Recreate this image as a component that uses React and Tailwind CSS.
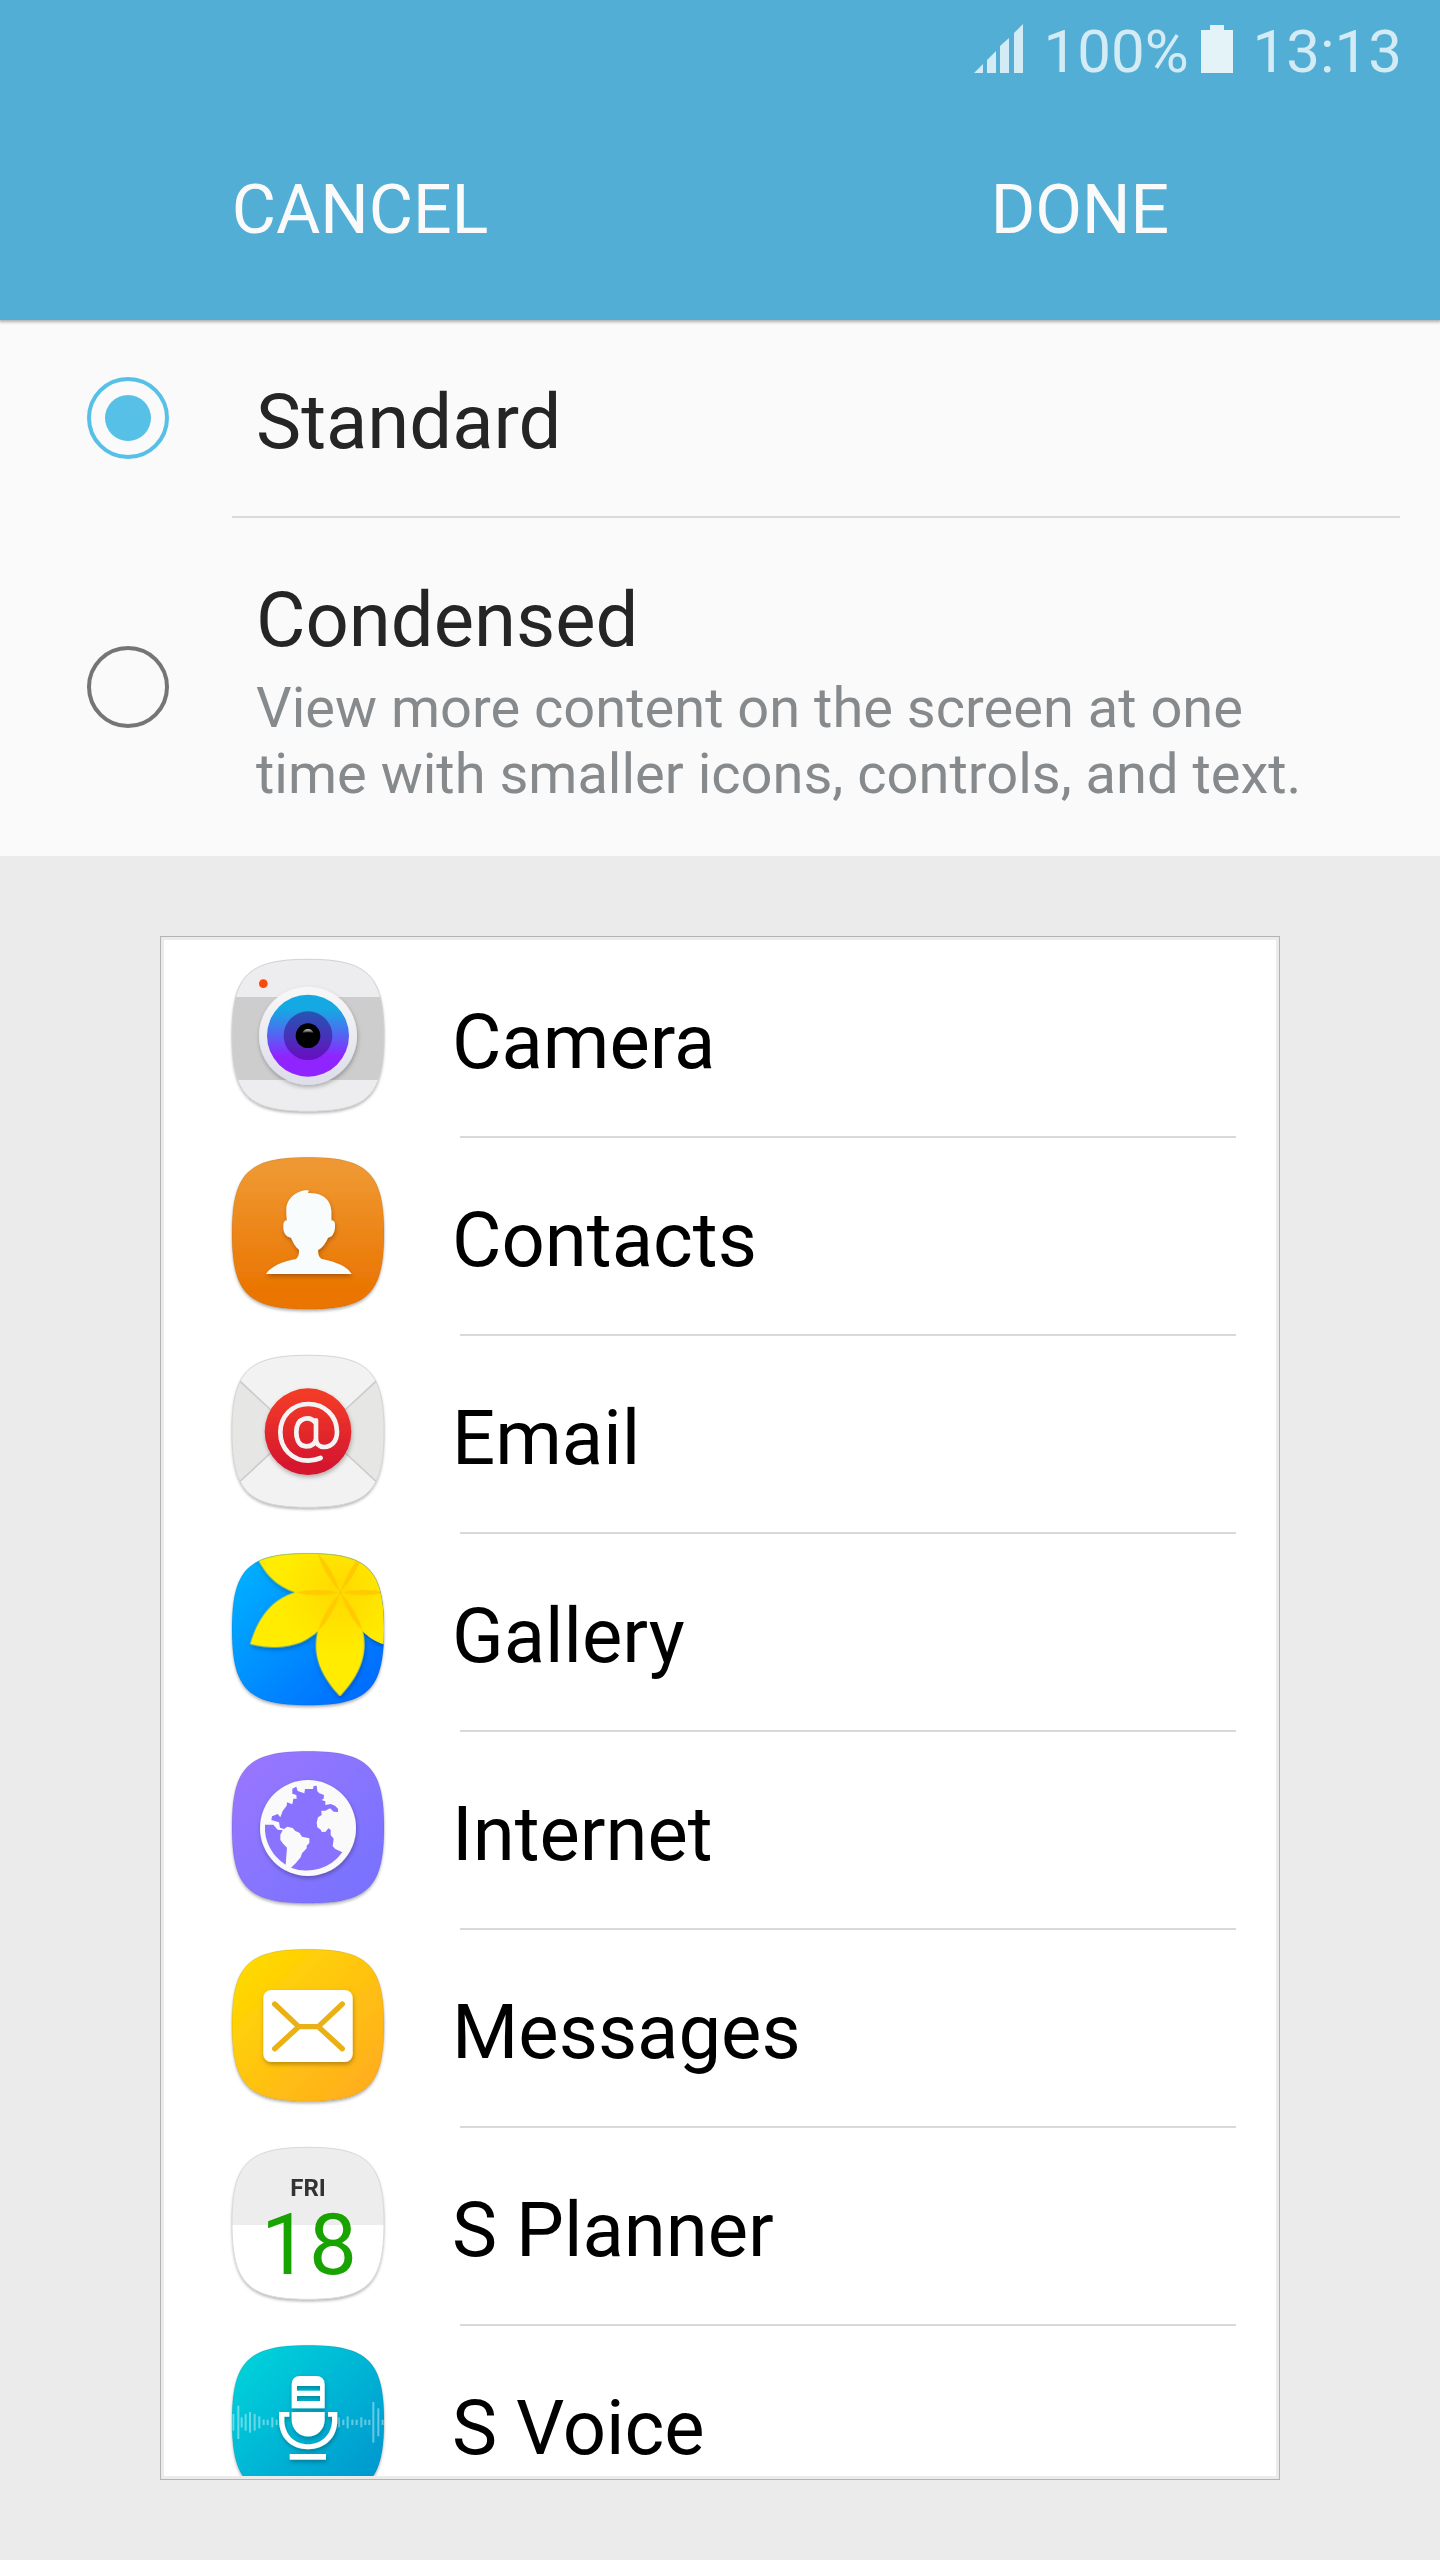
import React, { useState } from "react";

const SQUIRCLE =
  "M12 238C12 58 60 10 240 10S468 58 468 238S420 466 240 466S12 418 12 238Z";

// Rounded app tile. Artwork is drawn in units of a third of a pixel.
function AppIcon({ id, top, fill, outline, children }) {
  return (
    <svg
      viewBox={`54 ${top} 480 480`}
      className="size-40 shrink-0 overflow-visible"
      aria-hidden="true"
    >
      <defs>
        <clipPath id={`${id}-clip`}>
          <path d={SQUIRCLE} transform={`translate(54 ${top})`} />
        </clipPath>
        <filter id={`${id}-tile`} x="-10%" y="-10%" width="120%" height="120%">
          <feDropShadow dx="0" dy="6" stdDeviation="5" floodColor="#000" floodOpacity="0.3" />
        </filter>
        <filter id={`${id}-soft`} x="-20%" y="-20%" width="140%" height="150%">
          <feDropShadow dx="2" dy="7" stdDeviation="6" floodColor="#000" floodOpacity="0.28" />
        </filter>
      </defs>
      {children[0]}
      <path d={SQUIRCLE} transform={`translate(54 ${top})`} fill={fill} filter={`url(#${id}-tile)`} />
      <g clipPath={`url(#${id}-clip)`}>{children[1]}</g>
      <path
        d={SQUIRCLE}
        transform={`translate(54 ${top})`}
        fill="none"
        stroke={outline || "#00000018"}
        strokeWidth="3"
      />
    </svg>
  );
}

function Gradient({ id, from, to, diagonal }) {
  return (
    <linearGradient id={id} x1="0" y1="0" x2={diagonal ? "1" : "0"} y2="1">
      <stop offset="0.1" stopColor={from} />
      <stop offset="0.9" stopColor={to} />
    </linearGradient>
  );
}

function CameraIcon() {
  return (
    <AppIcon id="camera" top={48} fill="#ededf0" outline="#d2d2d2">
      <defs>
        <linearGradient id="camera-lens" x1="0" y1="0" x2="0" y2="1">
          <stop offset="0.18" stopColor="#15a9e3" />
          <stop offset="0.5" stopColor="#5563f3" />
          <stop offset="0.75" stopColor="#9024ff" />
        </linearGradient>
        <Gradient id="camera-ring" from="#f6f6f7" to="#dfdfec" />
        <linearGradient id="camera-glint" x1="0" y1="0" x2="0" y2="1">
          <stop offset="0" stopColor="#d0d0d0" />
          <stop offset="1" stopColor="#222" />
        </linearGradient>
      </defs>
      <>
        <rect x="54" y="171" width="480" height="249" fill="#cdcdcd" />
        <circle cx="160" cy="131" r="13" fill="#fb4a08" />
        <circle cx="294" cy="287" r="147" fill="url(#camera-ring)" filter="url(#camera-soft)" />
        <circle cx="294" cy="287" r="123" fill="url(#camera-lens)" />
        <circle cx="294" cy="287" r="73" fill="#34007a" opacity="0.48" />
        <circle cx="294" cy="287" r="37" fill="#000" />
        <path d="M278 279C280 263 308 263 310 279Q294 274 278 279Z" fill="url(#camera-glint)" />
      </>
    </AppIcon>
  );
}

function ContactsIcon() {
  return (
    <AppIcon id="contacts" top={42} fill="url(#contacts-bg)">
      <defs>
        <Gradient id="contacts-bg" from="#ef9730" to="#ea7400" />
      </defs>
      <path
        d="M296 151L294 159C340 156 364 183 364 215V241C374 242 376 250 375 262C373 282 365 292 354 293C345 312 338 322 324 330C324 344 328 354 336 357C380 366 412 380 425 402H168C180 380 220 364 258 357C266 350 268 340 267 329C255 320 250 308 243 293C230 292 220 280 220 262C220 248 222 242 231 241C229 230 229 220 229 208C230 175 260 150 296 151Z"
        fill="#f8fcfd"
        filter="url(#contacts-soft)"
      />
    </AppIcon>
  );
}

function EmailIcon() {
  return (
    <AppIcon id="email" top={36} fill="#f2f2f2" outline="#d5d5d5">
      <defs>
        <Gradient id="email-badge" from="#f23a28" to="#d4172f" />
      </defs>
      <>
        <path d="M40 75L88 122L245 274L88 426L40 470Z" fill="#e6e6e5" />
        <path d="M548 75L500 122L343 274L500 426L548 470Z" fill="#e6e6e5" />
        <path
          d="M60 95L88 122L225 249M528 95L500 122L363 249M60 452L88 426L225 299M528 452L500 426L363 299"
          fill="none"
          stroke="#cbcbcb"
          strokeWidth="5"
        />
        <circle cx="294" cy="275" r="130" fill="url(#email-badge)" filter="url(#email-soft)" />
        <path
          d="M318 241V297C318 312 328 321 342 321C366 321 381 302 381 275C380 226 343 192 295 192C247 192 211 229 211 277C211 326 247 362 295 362C309 362 320 359 332 354M318 250C306 233 292 234 283 236C266 241 259 256 259 277C259 300 268 319 289 319C303 319 315 312 318 297"
          fill="none"
          stroke="#f4f4f4"
          strokeWidth="14"
          strokeLinecap="round"
          strokeLinejoin="round"
        />
      </>
    </AppIcon>
  );
}

const TURNS = [0, 60, 120, 180, 240, 300];

function GalleryIcon() {
  return (
    <AppIcon id="gallery" top={30} fill="url(#gallery-bg)">
      <defs>
        <Gradient id="gallery-bg" from="#00aeff" to="#006cff" diagonal />
        <radialGradient id="gallery-petal" gradientUnits="userSpaceOnUse" cx="0" cy="0" r="300">
          <stop offset="0.1" stopColor="#ffdc00" />
          <stop offset="0.6" stopColor="#ffec00" />
        </radialGradient>
      </defs>
      <g transform="translate(391 157)">
        <g filter="url(#gallery-soft)">
          {TURNS.map((turn) => (
            <path
              key={turn}
              transform={`rotate(${turn})`}
              d="M0 0C32 38 58 80 67 114C80 170 72 235 -1 312C-74 235 -82 170 -67 114C-58 80 -32 38 0 0Z"
              fill="url(#gallery-petal)"
            />
          ))}
        </g>
        {TURNS.map((turn) => (
          <path
            key={turn}
            transform={`rotate(${turn})`}
            d="M0 0Q75 -16 134 0Q75 16 0 0Z"
            fill="#ffca00"
          />
        ))}
      </g>
    </AppIcon>
  );
}

function InternetIcon() {
  return (
    <AppIcon id="internet" top={24} fill="url(#internet-bg)">
      <defs>
        <Gradient id="internet-bg" from="#9776ff" to="#7872ff" diagonal />
      </defs>
      <>
        <circle cx="294" cy="264" r="144" fill="#fafafa" filter="url(#internet-soft)" />
        <path
          d="M247 146L259 140L263 153L283 160L285 147L309 147L311 138L320 137L322 154L328 160L342 165L341 176L334 180L346 184L346 195L362 192L375 197L384 206V216L371 215L360 205L346 212H334L335 225L324 232L320 248L322 262L333 270L335 276L347 275L355 265L362 269V285L371 296L368 319L376 327L397 337A131 131 0 0 1 243 383L257 370L272 352L276 340L290 325V317L298 309V295L276 290L268 278L256 273L248 264L232 260L222 267L210 263L207 247L184 240L186 229L203 222L211 232L218 213L230 197L231 187L247 193L250 176L260 176L259 165L247 161Z"
          fill="#8872ff"
        />
        <path
          d="M165 254H190L203 269L218 271L211 284V300L220 312L231 323L227 374A130 130 0 0 1 165 254Z"
          fill="#8a73ff"
        />
      </>
    </AppIcon>
  );
}

function MessagesIcon() {
  return (
    <AppIcon id="messages" top={33} fill="url(#messages-bg)">
      <defs>
        <Gradient id="messages-bg" from="#ffd900" to="#ffae1e" diagonal />
      </defs>
      <>
        <rect x="160" y="165" width="268" height="216" rx="24" fill="#fff" filter="url(#messages-soft)" />
        <path
          d="M194 207L266 275L194 341M397 207L325 275L397 341M266 275H325"
          fill="none"
          stroke="#eab114"
          strokeWidth="16"
          strokeLinecap="round"
          strokeLinejoin="round"
        />
      </>
    </AppIcon>
  );
}

function PlannerIcon() {
  return (
    <AppIcon id="planner" top={42} fill="#ffffff" outline="#d8d8d8">
      <defs />
      <>
        <rect x="54" y="42" width="480" height="243" fill="#ededed" />
        <g textAnchor="middle" className="font-['Roboto',sans-serif]">
          <text x="294" y="198" fontSize="72" fontWeight="700" fill="#333">
            FRI
          </text>
          <text x="297" y="433" fontSize="256" fill="#18a300">
            18
          </text>
        </g>
      </>
    </AppIcon>
  );
}

// [x, height] of each bar in the sound wave
const WAVE = [
  [70, 50], [85, 100], [95, 30], [107, 50], [120, 62], [134, 50], [148, 36], [161, 16], [173, 16],
  [187, 30], [200, 16], [387, 30], [400, 16], [413, 36], [427, 16], [440, 16], [454, 30], [466, 16],
  [478, 16], [490, 122], [505, 84], [518, 16],
];

function VoiceIcon() {
  return (
    <AppIcon id="voice" top={66} fill="url(#voice-bg)">
      <defs>
        <Gradient id="voice-bg" from="#00d0da" to="#0098cf" diagonal />
      </defs>
      <>
        {WAVE.map(([x, height]) => (
          <rect key={x} x={x - 3} y={307 - height / 2} width="6" height={height} fill="#fff" opacity="0.4" />
        ))}
        <g fill="#fff" filter="url(#voice-soft)">
          <path
            fillRule="evenodd"
            d="M245 265V194Q245 168 271 168H318Q344 168 344 194V265ZM261 198V212H330V198ZM261 228V243H330V228Z"
          />
          <path d="M245 276H344V300A49 49 0 0 1 245 300Z" />
          <path d="M207 276H238V290H223V304C225 345 254 373 294 373S364 345 366 304V290H354V276H382V304C380 354 345 388 294 388S209 354 207 304Z" />
          <rect x="239" y="402" width="109" height="17" />
        </g>
      </>
    </AppIcon>
  );
}

const APPS = [
  ["Camera", CameraIcon],
  ["Contacts", ContactsIcon],
  ["Email", EmailIcon],
  ["Gallery", GalleryIcon],
  ["Internet", InternetIcon],
  ["Messages", MessagesIcon],
  ["S Planner", PlannerIcon],
  ["S Voice", VoiceIcon],
];

const OPTIONS = [
  { id: "standard", title: "Standard" },
  {
    id: "condensed",
    title: "Condensed",
    note: "View more content on the screen at one time with smaller icons, controls, and text.",
  },
];

function StatusBar() {
  return (
    <div className="flex h-[104px] items-start justify-end pt-[17px] pr-[38px] text-[60px] leading-[70px] text-[#d3ebf5]">
      <svg viewBox="0 0 49 49" className="mt-[7px] mr-5 size-[49px]" fill="currentColor" aria-hidden="true">
        <path d="M0 49L9 40V49ZM13 49V36L22 27V49ZM26 49V22L35 14V49ZM40 49V9L49 0V49Z" />
      </svg>
      <span>100%</span>
      <svg viewBox="0 0 32 48" className="mt-2 mr-5 ml-3 h-12 w-8" fill="#e4f3f8" aria-hidden="true">
        <path d="M9 0H23V5H32V48H0V5H9Z" />
      </svg>
      <span>13:13</span>
    </div>
  );
}

function Option({ option, checked, onSelect }) {
  return (
    <div className="flex items-center pr-10 pl-[87px]">
      <input
        type="radio"
        name="display"
        id={option.id}
        checked={checked}
        onChange={() => onSelect(option.id)}
        className="grid size-[82px] shrink-0 appearance-none place-items-center rounded-full border-4 border-[#757575] before:hidden before:size-[46px] before:rounded-full before:bg-[#56c0e6] checked:border-[#56c0e6] checked:before:block"
      />
      <label htmlFor={option.id} className="ml-[87px] block flex-1 pt-[57px] pr-16 pb-[49px]">
        <span className="block text-[76px] leading-[90px] text-[#252525]">{option.title}</span>
        {option.note && (
          <span className="mt-2.5 block text-[56px] leading-[66px] text-[#868a8c]">{option.note}</span>
        )}
      </label>
    </div>
  );
}

export default function App() {
  const [selected, setSelected] = useState("standard");
  return (
    <div className="flex h-screen flex-col bg-[#ebebeb] font-['Roboto',sans-serif]">
      <header className="relative bg-[#52aed5] shadow-[0_1px_3px_1px_rgba(0,0,0,0.3)]">
        <StatusBar />
        <div className="flex h-[216px] items-center text-[68px] leading-[80px] text-[#fafafa]">
          <button type="button" className="h-full flex-1 pb-[4px]">
            CANCEL
          </button>
          <button type="button" className="h-full flex-1 pb-[4px]">
            DONE
          </button>
        </div>
      </header>

      <fieldset className="bg-[#fafafa]">
        <Option option={OPTIONS[0]} checked={selected === "standard"} onSelect={setSelected} />
        <div className="mr-10 ml-[232px] h-0.5 bg-[#d9dbdb]" />
        <Option option={OPTIONS[1]} checked={selected === "condensed"} onSelect={setSelected} />
      </fieldset>

      <main className="mx-40 my-20 min-h-0 flex-1 border border-[#b4b4b4] p-[3px]">
        <ul className="h-full overflow-hidden bg-white">
          {APPS.map(([name, Icon]) => (
            <li key={name}>
              <div className="flex h-[196px] items-start gap-16 pt-4 pl-16">
                <Icon />
                <span className="pt-[41px] text-[76px] leading-[90px] text-black">{name}</span>
              </div>
              <div className="mr-10 ml-[296px] h-0.5 bg-[#d9d9d9]" />
            </li>
          ))}
        </ul>
      </main>
    </div>
  );
}
